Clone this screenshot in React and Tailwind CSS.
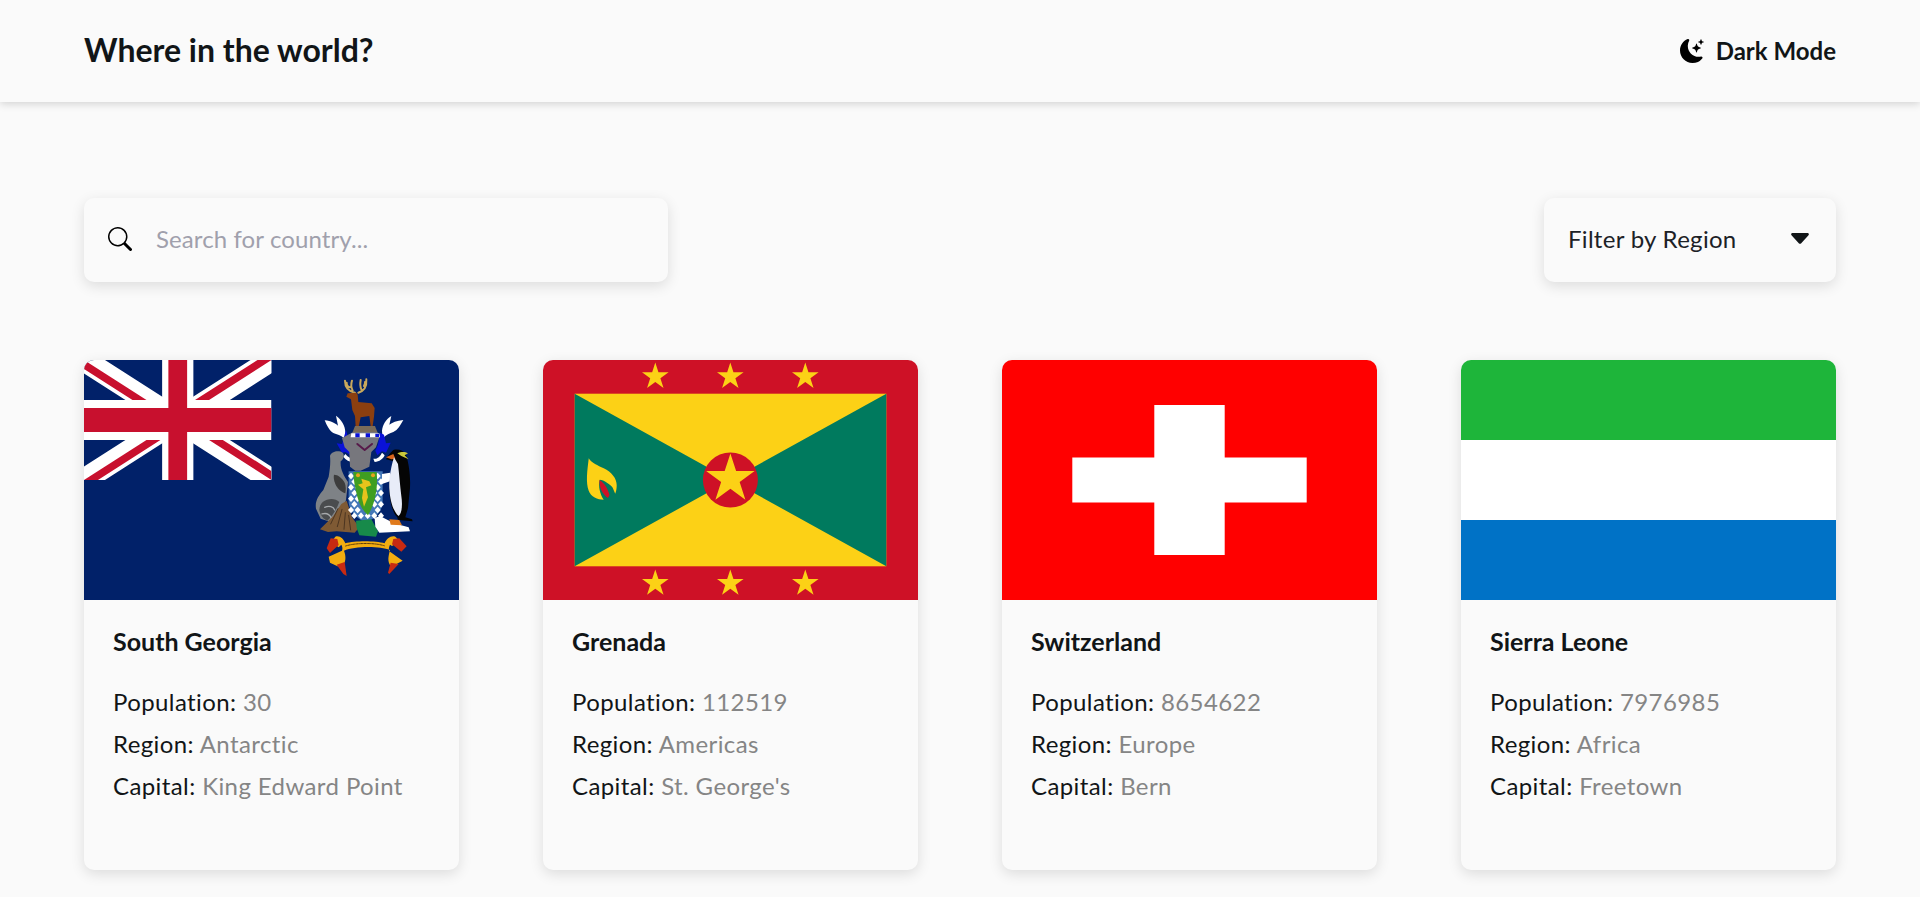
import React from "react";
import { BsMoonStarsFill, BsSearch } from "react-icons/bs";

const star = (cx, cy, R) => {
  const pts = [];
  for (let i = 0; i < 10; i++) {
    const r = i % 2 === 0 ? R : R * 0.382;
    const a = -Math.PI / 2 + (i * Math.PI) / 5;
    pts.push(`${(cx + r * Math.cos(a)).toFixed(2)},${(cy + r * Math.sin(a)).toFixed(2)}`);
  }
  return pts.join(" ");
};

function FlagSGS() {
  const lozenges = [];
  for (let row = 0; row < 8; row++) {
    for (let col = 0; col < 5; col++) {
      const x = 153 + col * 20 + (row % 2 ? 10 : 0);
      const y = 318 + row * 17;
      if (x < 248 && !(x > 178 && x < 222 && y < 430)) {
        lozenges.push(<path key={`${row}-${col}`} d={`M${x} ${y - 10}l9 10-9 10-9-10z`} fill="#fff" />);
      }
    }
  }
  return (
    <svg viewBox="0 0 375 240" className="block h-[240px] w-full">
      <defs>
        <clipPath id="jackClip">
          <path d="M30,15 h30 v15 z v15 h-30 z h-30 v-15 z v-15 h30 z" />
        </clipPath>
      </defs>
      <rect width="375" height="240" fill="#012169" />
      <svg x="0" y="0" width="187.5" height="120" viewBox="0 0 60 30" preserveAspectRatio="none">
        <path d="M0,0 L60,30 M60,0 L0,30" stroke="#fff" strokeWidth="6" />
        <path d="M0,0 L60,30 M60,0 L0,30" clipPath="url(#jackClip)" stroke="#C8102E" strokeWidth="4" />
        <path d="M30,0 v30 M0,15 h60" stroke="#fff" strokeWidth="10" />
        <path d="M30,0 v30 M0,15 h60" stroke="#C8102E" strokeWidth="6" />
      </svg>
      <g transform="translate(216 10) scale(0.3333)" strokeLinejoin="round" strokeLinecap="round" className="blur-[0.5px]">
        {/* antlers */}
        <path d="M165 68c-18-4-30-16-30-36M150 52c-8-2-10-8-10-14M158 62c-4-8-6-18-2-30M175 68c14-4 26-14 24-40M184 58c-4-8-4-16-2-28M192 48c2-4 4-8 3-12" fill="none" stroke="#c8a85c" strokeWidth="6" />
        {/* stag */}
        <path d="M143 70l26-2 4 6 2 22 40 4 9 14-2 26-4 28h-6l-4-30-26 4-6 28h-9l-2-32-8-18-4-32-14-8z" fill="#8b3f10" />
        {/* torse */}
        <path d="M165 168h60l8 20h-76z" fill="#7a6c5a" />
        {/* wings */}
        <path d="M74 151c20 2 30 8 40 16l-6-30c16 12 28 30 28 50l-2 20c-10-12-24-14-34-18-12-6-20-24-26-38z" fill="#fff" />
        <path d="M310 150c-20 2-34 8-42 14l6-26c-16 10-26 26-28 44l2 24c10-12 22-16 32-20 14-6 22-22 30-36z" fill="#fff" />
        {/* mantling */}
        <path d="M138 180l10 34 8 26-4 16-16-10-10 2-16-28 16 2z" fill="#0a12d8" />
        <path d="M240 188l-6 36-8 18 6 14 14-12 12 4 14-30-14 2-6-26z" fill="#0a12d8" />
        <path d="M136 252c10 12 22 16 34 14l-4 10c-14 2-28-4-36-16zM246 248c-6 12-14 20-26 18l4 10c14 0 26-10 30-20z" fill="#fff" />
        {/* helm */}
        <path d="M160 186h72l6 16-10 30-14 14-6 44-26 12h-16l-16-12-2-44-14-14-8-28z" fill="#77777d" />
        <path d="M154 190h84l2 12h-88z" fill="#fff" />
        <path d="M166 190h13v12h-13zM197 190h13v12h-13zM226 191h11v10h-11z" fill="#0a12d8" />
        <path d="M172 222l22 18 22-18" fill="none" stroke="#571a4a" strokeWidth="6" />
        {/* seal */}
        <path d="M90 258c4-14 26-18 38-10 6 6 4 20-6 26-2 24 10 44 22 62l-6 54-20 60-26 6-30-10-14-30c-4-22 8-40 22-56l16-40c4-22 6-44 4-62z" fill="#7e8286" />
        <path d="M102 314c12 0 24 10 32 24 4 10 4 22 2 32-12-4-24-14-30-28-4-10-6-20-4-28z" fill="#3d3d3d" />
        <path d="M68 396c16-12 38-12 50 0-8 22-22 44-36 56-12-4-22-18-24-32 0-10 4-18 10-24z" fill="#4a4c4e" />
        <path d="M74 412c14-6 26-2 30 8M66 432c12-4 22 0 28 12" fill="none" stroke="#a6a9ac" strokeWidth="4" />
        {/* tussac */}
        <path d="M60 478l40-40 24-36 16-10 16 50 22 30-14 16-54-4-26 2z" fill="#7f5a34" />
        <path d="M92 462l22-46M112 470l14-52M132 478l4-50M152 480l-6-44" stroke="#4b3420" strokeWidth="3" fill="none" />
        {/* shield */}
        <path d="M146 304h102v94c-4 30-24 48-50 60-28-12-48-32-52-60z" fill="#4478b8" />
        {lozenges}
        <path d="M160 306h70c4 40-2 90-26 130-12-12-24-26-32-56-6-24-12-50-12-74z" fill="#3f9e22" />
        <path d="M184 326l24 8 6 12-16 6 6 30-12 28-6-26 4-26-16-14 14-4z" fill="#e7c31c" />
        <circle cx="174" cy="316" r="6" fill="#e8a21c" />
        <circle cx="219" cy="316" r="6" fill="#e8a21c" />
        {/* grass base */}
        <path d="M168 452l46-4 20 36-6 16-50-4-8-22z" fill="#178a4a" />
        {/* snow/white */}
        <path d="M224 444l16-6 42 22 44 12 4 12-92 4-12-18z" fill="#fff" />
        {/* penguin wing */}
        <path d="M246 312l24-4v26l-24 8z" fill="#fff" />
        {/* penguin */}
        <path d="M280 240c14-4 30 0 38 14 8 24 14 60 12 100l-6 60-8 28 20 6 2 6-44-4-2-8c-14-12-24-50-24-84 0-36 10-62 14-84l-24-6c6-12 14-20 22-28z" fill="#050505" />
        <path d="M258 262l22-10 6 14-12 2z" fill="#d9641c" />
        <path d="M282 262c-8 26-16 64-14 94 2 34 12 70 28 82 10-8 12-34 8-60-4-32-6-62-10-96z" fill="#e8ecf8" />
        <path d="M292 250c10-4 22-6 32 0l-10 6 12 12-22-10z" fill="#c9c73a" />
        <path d="M268 448l30 2 8 16-34-2z" fill="#e07a1c" />
        {/* scroll */}
        <path d="M106 500c14-4 24 6 30 20 28-8 90-8 118 0 6-14 18-24 32-20l14 14-24 14-6-4c-4 8-4 14-2 20l40 28-34 18c-14-14-8-34-4-50-30-12-106-12-138 2 6 16 8 34-8 52l-34-16-4-18 40-18c2-6 2-10-2-18l-8 8-22-16z" fill="#f3ad10" />
        <path d="M137 528c30-10 90-10 118 0" fill="none" stroke="#5a3a08" strokeWidth="3" strokeDasharray="5 3" />
        <path d="M92 505l20 2 4 18-26 24-10-14z" fill="#c72a12" />
        <path d="M298 505l-18 2-4 16 28 22 16-16z" fill="#c72a12" />
        <path d="M110 584l24-8 6 42-10-6z" fill="#c72a12" />
        <path d="M272 578l24 4-28 30-4-4z" fill="#c72a12" />
      </g>
    </svg>
  );
}

function FlagGrenada() {
  const xs = [112.3, 187.3, 262.3];
  return (
    <svg viewBox="0 0 375 240" className="block h-[240px] w-full">
      <rect width="375" height="240" fill="#ce1126" />
      <rect x="31.7" y="33.7" width="311.6" height="172.6" fill="#fcd116" />
      <path d="M31.7 33.7L187.5 120 31.7 206.3zM343.3 33.7L187.5 120l155.800 86.300z" fill="#007a5e" />
      <circle cx="187.4" cy="120" r="27.5" fill="#ce1126" />
      <polygon points={star(187.4, 119, 25.5)} fill="#fcd116" />
      {xs.map((x) => (
        <polygon key={`t${x}`} points={star(x, 16.6, 14)} fill="#fcd116" />
      ))}
      {xs.map((x) => (
        <polygon key={`b${x}`} points={star(x, 223.4, 14)} fill="#fcd116" />
      ))}
      <path d="M45.7 98.3c3 5 9 7 15 10 8 4 13 10 13 17 0 3-.5 6-1.500 8.500l-2.500-6c-2-3-9-8-13-8-1.500 6 0 14 4 20-6 0-13-3-15-9-3-8-1.500-20 0-32z" fill="#fcd116" />
      <path d="M56.500 120c5 3 8 8 10 15l-1.500 3c-5-3-9-10-8.500-18z" fill="#ce1126" />
    </svg>
  );
}

function FlagSwiss() {
  return (
    <svg viewBox="0 0 375 240" className="block h-[240px] w-full">
      <rect width="375" height="240" fill="#ff0000" />
      <path d="M152.3 45h70.4v52.5h82v45h-82V195h-70.4v-52.5h-82v-45h82z" fill="#fff" />
    </svg>
  );
}

function FlagSierraLeone() {
  return (
    <svg viewBox="0 0 375 240" className="block h-[240px] w-full">
      <rect width="375" height="80" fill="#1eb53a" />
      <rect y="80" width="375" height="80" fill="#ffffff" />
      <rect y="160" width="375" height="80" fill="#0072c6" />
    </svg>
  );
}

const countries = [
  { name: "South Georgia", pop: "30", region: "Antarctic", capital: "King Edward Point", Flag: FlagSGS },
  { name: "Grenada", pop: "112519", region: "Americas", capital: "St. George's", Flag: FlagGrenada },
  { name: "Switzerland", pop: "8654622", region: "Europe", capital: "Bern", Flag: FlagSwiss },
  { name: "Sierra Leone", pop: "7976985", region: "Africa", capital: "Freetown", Flag: FlagSierraLeone },
];

function Line({ label, value }) {
  return (
    <p className="text-[24px] leading-[42px] tracking-[0.4px] text-[#111517]">
      {label}: <span className="text-[#858585]">{value}</span>
    </p>
  );
}

export default function App() {
  return (
    <div className="min-h-[897px] bg-[#fafafa] font-['Lato','Noto_Sans',sans-serif] text-[#111517]">
      <header className="flex h-[102px] items-center justify-between bg-[#fafafa] px-[84px] shadow-[0_2px_8px_rgba(0,0,0,0.16)]">
        <h1 className="-mt-[3px] text-[32px] font-bold">Where in the world?</h1>
        <button className="flex items-center gap-[12px] text-[24px] font-bold">
          <BsMoonStarsFill className="h-[24px] w-[24px] text-black" />
          <span>Dark Mode</span>
        </button>
      </header>
      <main className="px-[84px] pt-[96px] pb-[27px]">
        <div className="flex items-center justify-between">
          <label className="flex h-[84px] w-[584px] items-center gap-[24px] rounded-[10px] bg-[#fafafa] pl-[24px] shadow-[0_4px_14px_rgba(0,0,0,0.12)]">
            <BsSearch className="-mt-[2px] h-[24px] w-[24px] text-black" />
            <input
              placeholder="Search for country..."
              className="-mt-[2px] flex-1 bg-transparent text-[24px] tracking-[0.1px] outline-none placeholder:text-[#a0a0ac]"
            />
          </label>
          <div className="flex h-[84px] w-[292px] items-center justify-between rounded-[10px] bg-[#fafafa] pr-[27px] pl-[24px] shadow-[0_4px_14px_rgba(0,0,0,0.12)]">
            <span className="-mt-[2px] text-[24px] tracking-[0.3px] text-[#1c2126]">Filter by Region</span>
            <svg viewBox="0 0 18 11" className="mb-[3px] h-[11px] w-[18px]">
              <path d="M1.5 0h15c1.2 0 1.8 1.3 1 2.2L10 10.4c-.5.6-1.500.6-2 0L.5 2.200C-.3 1.300.3 0 1.500 0z" fill="#111517" />
            </svg>
          </div>
        </div>
        <div className="mt-[78px] grid grid-cols-4 gap-[84px]">
          {countries.map(({ name, pop, region, capital, Flag }) => (
            <article key={name} className="h-[510px] overflow-hidden rounded-[10px] bg-[#fafafa] shadow-[0_4px_14px_rgba(0,0,0,0.12)]">
              <Flag />
              <div className="pt-[27px] pl-[29px]">
                <h2 className="mb-[26px] text-[25px] leading-[28px] font-bold">{name}</h2>
                <Line label="Population" value={pop} />
                <Line label="Region" value={region} />
                <Line label="Capital" value={capital} />
              </div>
            </article>
          ))}
        </div>
      </main>
    </div>
  );
}
